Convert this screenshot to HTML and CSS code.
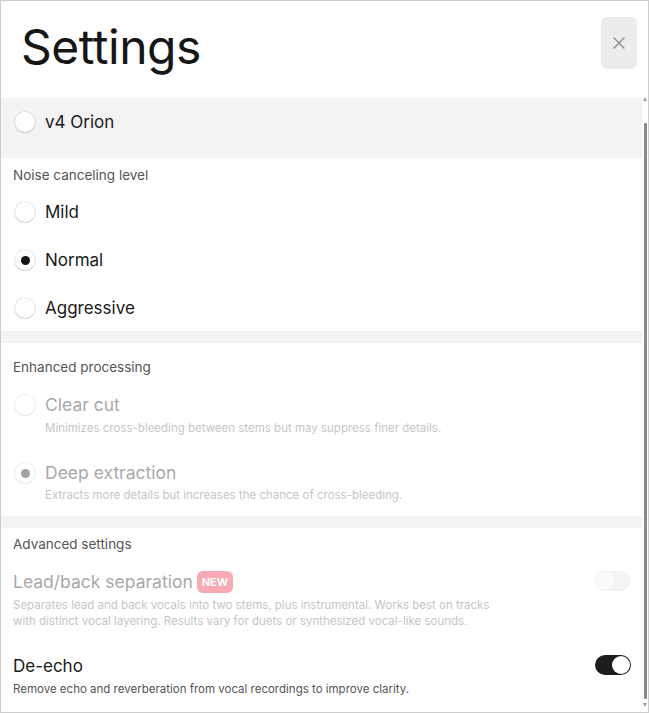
FILE: index.html
```html
<!DOCTYPE html>
<html>
<head>
<meta charset="utf-8">
<link rel="stylesheet" href="styles.css">
</head>
<body>
<div class="frame">
  <header class="header">
    <h1 class="title">Settings</h1>
    <button class="close" aria-label="Close">
      <svg width="12" height="12" viewBox="0 0 12 12"><path d="M1 1L11 11M11 1L1 11" stroke="#8a8a8a" stroke-width="1.3" stroke-linecap="round"/></svg>
    </button>
  </header>
  <div class="body">
    <div class="content">
      <div class="model-row">
        <span class="radio"></span>
        <span class="opt-label">v4 Orion</span>
      </div>

      <section class="section s-noise">
        <div class="sec-label">Noise canceling level</div>
        <div class="opt"><span class="radio"></span><span class="opt-label">Mild</span></div>
        <div class="opt"><span class="radio checked"></span><span class="opt-label">Normal</span></div>
        <div class="opt"><span class="radio"></span><span class="opt-label">Aggressive</span></div>
      </section>

      <div class="sep"></div>

      <section class="section s-enh">
        <div class="sec-label">Enhanced processing</div>
        <div class="eopt">
          <div class="eopt-row"><span class="radio disabled"></span><span class="opt-label muted">Clear cut</span></div>
          <div class="desc muted-desc">Minimizes cross-bleeding between stems but may suppress finer details.</div>
        </div>
        <div class="eopt">
          <div class="eopt-row"><span class="radio disabled checked"></span><span class="opt-label muted">Deep extraction</span></div>
          <div class="desc muted-desc">Extracts more details but increases the chance of cross-bleeding.</div>
        </div>
      </section>

      <div class="sep"></div>

      <section class="section s-adv">
        <div class="sec-label">Advanced settings</div>
        <div class="adv lead">
          <div class="adv-text">
            <div class="adv-title muted"><span>Lead/back separation</span><span class="badge">NEW</span></div>
            <div class="desc muted-desc">Separates lead and back vocals into two stems, plus instrumental. Works best on tracks with distinct vocal layering. Results vary for duets or synthesized vocal-like sounds.</div>
          </div>
          <span class="toggle off"><span class="knob"></span></span>
        </div>
        <div class="adv echo">
          <div class="adv-text">
            <div class="adv-title"><span>De-echo</span></div>
            <div class="desc">Remove echo and reverberation from vocal recordings to improve clarity.</div>
          </div>
          <span class="toggle on"><span class="knob"></span></span>
        </div>
      </section>
    </div>
    <div class="scrollbar">
      <span class="arrow up"></span>
      <span class="thumb"></span>
      <span class="arrow down"></span>
    </div>
  </div>
</div>
</body>
</html>
```

FILE: styles.css
```css
* { box-sizing: border-box; }
html, body { margin: 0; padding: 0; background: #fff; }
body {
  font-family: Inter, "Liberation Sans", sans-serif;
  color: #1a1a1a;
}
.frame {
  width: 649px;
  height: 713px;
  border: 1px solid #cdcdcd;
  display: flex;
  flex-direction: column;
  overflow: hidden;
  background: #fff;
}
.header {
  height: 96px;
  flex: none;
  display: flex;
  justify-content: space-between;
  align-items: flex-start;
  padding: 16px 11px 0 20px;
}
.title {
  margin: 0;
  font-weight: 400;
  font-size: 48px;
  line-height: 56px;
  margin-top: 2px;
  letter-spacing: -0.01em;
  color: #161616;
}
.close {
  width: 36px;
  height: 52px;
  border: none;
  border-radius: 6px;
  background: #ececec;
  display: flex;
  align-items: center;
  justify-content: center;
  padding: 0;
}
.body {
  flex: 1;
  display: flex;
  min-height: 0;
}
.content {
  width: 641px;
  flex: none;
  overflow: hidden;
}
.scrollbar {
  width: 6px;
  flex: none;
  display: flex;
  flex-direction: column;
  align-items: center;
}
.arrow {
  width: 0; height: 0;
  border-left: 2px solid transparent;
  border-right: 2px solid transparent;
}
.arrow.up { border-bottom: 4px solid #9a9a9a; }
.arrow.down { border-top: 4px solid #9a9a9a; margin-top: 4px; }
.thumb {
  width: 3px;
  height: 576px;
  margin-top: 22px;
  background: #8a8a8a;
  border-radius: 1px;
}

.model-row {
  background: #f3f3f3;
  height: 60px;
  margin-top: 1px;
  display: flex;
  align-items: flex-start;
  gap: 10px;
  padding: 14px 14px 0;
}
.radio {
  width: 20px;
  height: 20px;
  border-radius: 50%;
  background: #fff;
  flex: none;
  box-shadow: 0 0 0 1px rgba(0,0,0,0.07), 0 1px 2px rgba(0,0,0,0.12);
  display: flex;
  align-items: center;
  justify-content: center;
}
.radio.checked::after {
  content: "";
  width: 9px;
  height: 9px;
  border-radius: 50%;
  background: #141414;
}
.radio.disabled {
  box-shadow: 0 0 0 1px rgba(0,0,0,0.05), 0 1px 2px rgba(0,0,0,0.06);
}
.radio.disabled.checked::after { background: #a2a2a2; }
.opt-label {
  font-size: 17px;
  line-height: 20px;
  color: #1a1a1a;
}
.opt-label.muted, .muted { color: #a9a9a9; }

.section { padding: 0 11px 0 12px; }
.sec-label {
  font-size: 13.5px;
  line-height: 16px;
  color: #555;
}
.s-noise { padding-top: 9px; }
.s-noise .sec-label { margin-bottom: 4px; }
.opt {
  height: 48px;
  display: flex;
  align-items: center;
  gap: 10px;
  padding-left: 2px;
  padding-top: 2px;
}
.sep { height: 12px; background: #f3f3f3; }

.s-enh { padding-top: 16px; padding-bottom: 13px; }
.s-enh .sec-label { margin-bottom: 17px; }
.eopt { padding-left: 2px; padding-top: 1px; }
.eopt + .eopt { margin-top: 24px; }
.eopt-row {
  display: flex;
  align-items: center;
  gap: 10px;
  height: 24px;
}
.eopt .opt-label { font-size: 17.5px; }
.eopt .desc { padding-left: 30px; margin-top: 3px; }
.eopt + .eopt .desc { margin-top: 2px; }
.desc {
  font-size: 11.5px;
  line-height: 16px;
  color: #555;
}
.muted-desc { color: #c6c6c6; }

.s-adv { padding-top: 8px; }
.adv {
  display: flex;
  justify-content: space-between;
  align-items: flex-start;
}
.adv-text { width: 480px; }
.lead { margin-top: 18px; }
.echo { margin-top: 25px; }
.adv-title {
  display: flex;
  align-items: center;
  gap: 4px;
  font-size: 17.5px;
  line-height: 24px;
  height: 24px;
}
.echo .adv-title { font-size: 17px; }
.adv .desc { margin-top: 3px; }
.badge {
  background: #f8aab4;
  color: #fff;
  font-size: 11px;
  font-weight: 700;
  line-height: 22px;
  height: 22px;
  padding: 0 5px;
  border-radius: 6px;
}
.toggle {
  width: 36px;
  height: 20px;
  border-radius: 10px;
  flex: none;
  display: flex;
  align-items: center;
  padding: 1px;
  margin-top: 1px;
}
.toggle .knob {
  width: 18px;
  height: 18px;
  border-radius: 50%;
  background: #fff;
}
.toggle.off { background: #f3f4f6; }
.toggle.off .knob { background: #fbfbfc; }
.toggle.on { background: #1d1d1f; justify-content: flex-end; margin-top: 1px; }
```
